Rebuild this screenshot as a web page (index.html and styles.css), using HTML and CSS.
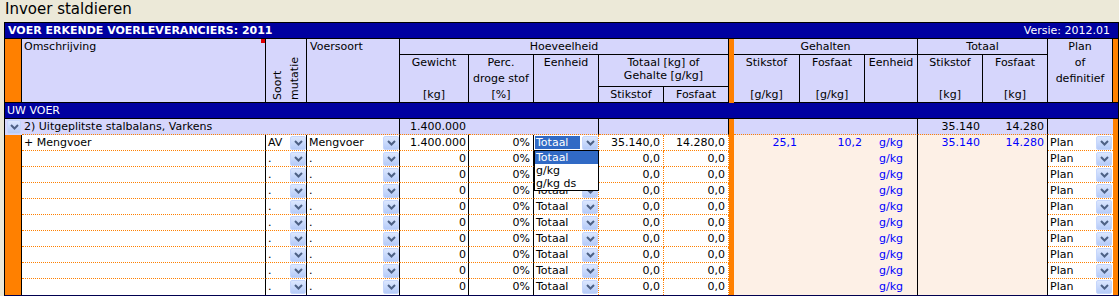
FILE: index.html
```html
<!DOCTYPE html>
<html>
<head>
<meta charset="utf-8">
<link rel="stylesheet" href="styles.css">
</head>
<body>
<div class="title">Invoer staldieren</div>
<div class="sheet">
  <div class="bar"><span class="bar-title">VOER ERKENDE VOERLEVERANCIERS: 2011</span><span>Versie: 2012.01</span></div>

  <div class="h orange bl rs3"></div>
  <div class="h left rs3 mark">Omschrijving<span class="red"></span></div>
  <div class="h rs3 vert-cell"><span class="vert">Soort<br>mutatie</span></div>
  <div class="h left rs3 pl3">Voersoort</div>
  <div class="h cs5">Hoeveelheid</div>
  <div class="sep rs3"></div>
  <div class="h cs3">Gehalten</div>
  <div class="h cs2">Totaal</div>
  <div class="h rs3">Plan<br>of<br>definitief</div>
  <div class="orange rs3 hb"></div>

  <div class="h rs2">Gewicht<br><br>[kg]</div>
  <div class="h rs2">Perc.<br>droge stof<br>[%]</div>
  <div class="h rs2">Eenheid</div>
  <div class="h cs2 tight">Totaal [kg] of<br>Gehalte [g/kg]</div>
  <div class="h rs2">Stikstof<br><br>[g/kg]</div>
  <div class="h rs2">Fosfaat<br><br>[g/kg]</div>
  <div class="h rs2">Eenheid</div>
  <div class="h rs2">Stikstof<br><br>[kg]</div>
  <div class="h rs2">Fosfaat<br><br>[kg]</div>

  <div class="h">Stikstof</div>
  <div class="h">Fosfaat</div>

  <div class="uw">UW VOER</div>

  <div class="g gbtn"><span class="dd sm"><svg width="9" height="6" viewBox="0 0 9 6"><path d="M1 1L4.5 4.5L8 1" fill="none" stroke="#4d6185" stroke-width="2"/></svg></span></div>
  <div class="g cs3 bk left">2) Uitgeplitste stalbalans, Varkens</div>
  <div class="g num">1.400.000</div>
  <div class="g cs2 bk"></div>
  <div class="g cs2 bk"></div>
  <div class="sep"></div>
  <div class="g cs3 bk"></div>
  <div class="g num">35.140</div>
  <div class="g num bk">14.280</div>
  <div class="g"></div>
  <div class="orange"></div>

  <!-- row 1 -->
  <div class="orange bl"></div>
  <div class="d bk">+ Mengvoer</div>
  <div class="d bk combo">AV<span class="dd"><svg width="9" height="6" viewBox="0 0 9 6"><path d="M1 1L4.5 4.5L8 1" fill="none" stroke="#4d6185" stroke-width="2"/></svg></span></div>
  <div class="d bk combo">Mengvoer<span class="dd"><svg width="9" height="6" viewBox="0 0 9 6"><path d="M1 1L4.5 4.5L8 1" fill="none" stroke="#4d6185" stroke-width="2"/></svg></span></div>
  <div class="d bk num n2">1.400.000</div>
  <div class="d bk num">0%</div>
  <div class="d dt combo open"><span class="sel">Totaal</span><span class="dd"><svg width="9" height="6" viewBox="0 0 9 6"><path d="M1 1L4.5 4.5L8 1" fill="none" stroke="#4d6185" stroke-width="2"/></svg></span>
    <div class="popup"><div class="opt on">Totaal</div><div class="opt">g/kg</div><div class="opt">g/kg ds</div></div>
  </div>
  <div class="d dt num">35.140,0</div>
  <div class="d dt num">14.280,0</div>
  <div class="sep"></div>
  <div class="p num">25,1</div>
  <div class="p num">10,2</div>
  <div class="p bk mid">g/kg</div>
  <div class="p num">35.140</div>
  <div class="p num bk">14.280</div>
  <div class="d combo plan">Plan<span class="dd"><svg width="9" height="6" viewBox="0 0 9 6"><path d="M1 1L4.5 4.5L8 1" fill="none" stroke="#4d6185" stroke-width="2"/></svg></span></div>
  <div class="orange"></div>

  <!-- row 2 -->
  <div class="orange bl"></div>
  <div class="d bk"></div>
  <div class="d bk combo">.<span class="dd"><svg width="9" height="6" viewBox="0 0 9 6"><path d="M1 1L4.5 4.5L8 1" fill="none" stroke="#4d6185" stroke-width="2"/></svg></span></div>
  <div class="d bk combo">.<span class="dd"><svg width="9" height="6" viewBox="0 0 9 6"><path d="M1 1L4.5 4.5L8 1" fill="none" stroke="#4d6185" stroke-width="2"/></svg></span></div>
  <div class="d bk num n2">0</div>
  <div class="d bk num">0%</div>
  <div class="d dt combo"><span class="covered">Totaal</span></div>
  <div class="d dt num">0,0</div>
  <div class="d dt num">0,0</div>
  <div class="sep"></div>
  <div class="p"></div>
  <div class="p"></div>
  <div class="p bk mid">g/kg</div>
  <div class="p"></div>
  <div class="p bk"></div>
  <div class="d combo plan">Plan<span class="dd"><svg width="9" height="6" viewBox="0 0 9 6"><path d="M1 1L4.5 4.5L8 1" fill="none" stroke="#4d6185" stroke-width="2"/></svg></span></div>
  <div class="orange"></div>

  <!-- row 3 -->
  <div class="orange bl"></div>
  <div class="d bk"></div>
  <div class="d bk combo">.<span class="dd"><svg width="9" height="6" viewBox="0 0 9 6"><path d="M1 1L4.5 4.5L8 1" fill="none" stroke="#4d6185" stroke-width="2"/></svg></span></div>
  <div class="d bk combo">.<span class="dd"><svg width="9" height="6" viewBox="0 0 9 6"><path d="M1 1L4.5 4.5L8 1" fill="none" stroke="#4d6185" stroke-width="2"/></svg></span></div>
  <div class="d bk num n2">0</div>
  <div class="d bk num">0%</div>
  <div class="d dt combo"><span class="covered">Totaal</span></div>
  <div class="d dt num">0,0</div>
  <div class="d dt num">0,0</div>
  <div class="sep"></div>
  <div class="p"></div>
  <div class="p"></div>
  <div class="p bk mid">g/kg</div>
  <div class="p"></div>
  <div class="p bk"></div>
  <div class="d combo plan">Plan<span class="dd"><svg width="9" height="6" viewBox="0 0 9 6"><path d="M1 1L4.5 4.5L8 1" fill="none" stroke="#4d6185" stroke-width="2"/></svg></span></div>
  <div class="orange"></div>

  <!-- row 4 -->
  <div class="orange bl"></div>
  <div class="d bk"></div>
  <div class="d bk combo">.<span class="dd"><svg width="9" height="6" viewBox="0 0 9 6"><path d="M1 1L4.5 4.5L8 1" fill="none" stroke="#4d6185" stroke-width="2"/></svg></span></div>
  <div class="d bk combo">.<span class="dd"><svg width="9" height="6" viewBox="0 0 9 6"><path d="M1 1L4.5 4.5L8 1" fill="none" stroke="#4d6185" stroke-width="2"/></svg></span></div>
  <div class="d bk num n2">0</div>
  <div class="d bk num">0%</div>
  <div class="d dt combo">Totaal<span class="dd"><svg width="9" height="6" viewBox="0 0 9 6"><path d="M1 1L4.5 4.5L8 1" fill="none" stroke="#4d6185" stroke-width="2"/></svg></span></div>
  <div class="d dt num">0,0</div>
  <div class="d dt num">0,0</div>
  <div class="sep"></div>
  <div class="p"></div>
  <div class="p"></div>
  <div class="p bk mid">g/kg</div>
  <div class="p"></div>
  <div class="p bk"></div>
  <div class="d combo plan">Plan<span class="dd"><svg width="9" height="6" viewBox="0 0 9 6"><path d="M1 1L4.5 4.5L8 1" fill="none" stroke="#4d6185" stroke-width="2"/></svg></span></div>
  <div class="orange"></div>

  <!-- row 5 -->
  <div class="orange bl"></div>
  <div class="d bk"></div>
  <div class="d bk combo">.<span class="dd"><svg width="9" height="6" viewBox="0 0 9 6"><path d="M1 1L4.5 4.5L8 1" fill="none" stroke="#4d6185" stroke-width="2"/></svg></span></div>
  <div class="d bk combo">.<span class="dd"><svg width="9" height="6" viewBox="0 0 9 6"><path d="M1 1L4.5 4.5L8 1" fill="none" stroke="#4d6185" stroke-width="2"/></svg></span></div>
  <div class="d bk num n2">0</div>
  <div class="d bk num">0%</div>
  <div class="d dt combo">Totaal<span class="dd"><svg width="9" height="6" viewBox="0 0 9 6"><path d="M1 1L4.5 4.5L8 1" fill="none" stroke="#4d6185" stroke-width="2"/></svg></span></div>
  <div class="d dt num">0,0</div>
  <div class="d dt num">0,0</div>
  <div class="sep"></div>
  <div class="p"></div>
  <div class="p"></div>
  <div class="p bk mid">g/kg</div>
  <div class="p"></div>
  <div class="p bk"></div>
  <div class="d combo plan">Plan<span class="dd"><svg width="9" height="6" viewBox="0 0 9 6"><path d="M1 1L4.5 4.5L8 1" fill="none" stroke="#4d6185" stroke-width="2"/></svg></span></div>
  <div class="orange"></div>

  <!-- row 6 -->
  <div class="orange bl"></div>
  <div class="d bk"></div>
  <div class="d bk combo">.<span class="dd"><svg width="9" height="6" viewBox="0 0 9 6"><path d="M1 1L4.5 4.5L8 1" fill="none" stroke="#4d6185" stroke-width="2"/></svg></span></div>
  <div class="d bk combo">.<span class="dd"><svg width="9" height="6" viewBox="0 0 9 6"><path d="M1 1L4.5 4.5L8 1" fill="none" stroke="#4d6185" stroke-width="2"/></svg></span></div>
  <div class="d bk num n2">0</div>
  <div class="d bk num">0%</div>
  <div class="d dt combo">Totaal<span class="dd"><svg width="9" height="6" viewBox="0 0 9 6"><path d="M1 1L4.5 4.5L8 1" fill="none" stroke="#4d6185" stroke-width="2"/></svg></span></div>
  <div class="d dt num">0,0</div>
  <div class="d dt num">0,0</div>
  <div class="sep"></div>
  <div class="p"></div>
  <div class="p"></div>
  <div class="p bk mid">g/kg</div>
  <div class="p"></div>
  <div class="p bk"></div>
  <div class="d combo plan">Plan<span class="dd"><svg width="9" height="6" viewBox="0 0 9 6"><path d="M1 1L4.5 4.5L8 1" fill="none" stroke="#4d6185" stroke-width="2"/></svg></span></div>
  <div class="orange"></div>

  <!-- row 7 -->
  <div class="orange bl"></div>
  <div class="d bk"></div>
  <div class="d bk combo">.<span class="dd"><svg width="9" height="6" viewBox="0 0 9 6"><path d="M1 1L4.5 4.5L8 1" fill="none" stroke="#4d6185" stroke-width="2"/></svg></span></div>
  <div class="d bk combo">.<span class="dd"><svg width="9" height="6" viewBox="0 0 9 6"><path d="M1 1L4.5 4.5L8 1" fill="none" stroke="#4d6185" stroke-width="2"/></svg></span></div>
  <div class="d bk num n2">0</div>
  <div class="d bk num">0%</div>
  <div class="d dt combo">Totaal<span class="dd"><svg width="9" height="6" viewBox="0 0 9 6"><path d="M1 1L4.5 4.5L8 1" fill="none" stroke="#4d6185" stroke-width="2"/></svg></span></div>
  <div class="d dt num">0,0</div>
  <div class="d dt num">0,0</div>
  <div class="sep"></div>
  <div class="p"></div>
  <div class="p"></div>
  <div class="p bk mid">g/kg</div>
  <div class="p"></div>
  <div class="p bk"></div>
  <div class="d combo plan">Plan<span class="dd"><svg width="9" height="6" viewBox="0 0 9 6"><path d="M1 1L4.5 4.5L8 1" fill="none" stroke="#4d6185" stroke-width="2"/></svg></span></div>
  <div class="orange"></div>

  <!-- row 8 -->
  <div class="orange bl"></div>
  <div class="d bk"></div>
  <div class="d bk combo">.<span class="dd"><svg width="9" height="6" viewBox="0 0 9 6"><path d="M1 1L4.5 4.5L8 1" fill="none" stroke="#4d6185" stroke-width="2"/></svg></span></div>
  <div class="d bk combo">.<span class="dd"><svg width="9" height="6" viewBox="0 0 9 6"><path d="M1 1L4.5 4.5L8 1" fill="none" stroke="#4d6185" stroke-width="2"/></svg></span></div>
  <div class="d bk num n2">0</div>
  <div class="d bk num">0%</div>
  <div class="d dt combo">Totaal<span class="dd"><svg width="9" height="6" viewBox="0 0 9 6"><path d="M1 1L4.5 4.5L8 1" fill="none" stroke="#4d6185" stroke-width="2"/></svg></span></div>
  <div class="d dt num">0,0</div>
  <div class="d dt num">0,0</div>
  <div class="sep"></div>
  <div class="p"></div>
  <div class="p"></div>
  <div class="p bk mid">g/kg</div>
  <div class="p"></div>
  <div class="p bk"></div>
  <div class="d combo plan">Plan<span class="dd"><svg width="9" height="6" viewBox="0 0 9 6"><path d="M1 1L4.5 4.5L8 1" fill="none" stroke="#4d6185" stroke-width="2"/></svg></span></div>
  <div class="orange"></div>

  <!-- row 9 -->
  <div class="orange bl"></div>
  <div class="d bk"></div>
  <div class="d bk combo">.<span class="dd"><svg width="9" height="6" viewBox="0 0 9 6"><path d="M1 1L4.5 4.5L8 1" fill="none" stroke="#4d6185" stroke-width="2"/></svg></span></div>
  <div class="d bk combo">.<span class="dd"><svg width="9" height="6" viewBox="0 0 9 6"><path d="M1 1L4.5 4.5L8 1" fill="none" stroke="#4d6185" stroke-width="2"/></svg></span></div>
  <div class="d bk num n2">0</div>
  <div class="d bk num">0%</div>
  <div class="d dt combo">Totaal<span class="dd"><svg width="9" height="6" viewBox="0 0 9 6"><path d="M1 1L4.5 4.5L8 1" fill="none" stroke="#4d6185" stroke-width="2"/></svg></span></div>
  <div class="d dt num">0,0</div>
  <div class="d dt num">0,0</div>
  <div class="sep"></div>
  <div class="p"></div>
  <div class="p"></div>
  <div class="p bk mid">g/kg</div>
  <div class="p"></div>
  <div class="p bk"></div>
  <div class="d combo plan">Plan<span class="dd"><svg width="9" height="6" viewBox="0 0 9 6"><path d="M1 1L4.5 4.5L8 1" fill="none" stroke="#4d6185" stroke-width="2"/></svg></span></div>
  <div class="orange"></div>

  <!-- row 10 -->
  <div class="orange bl"></div>
  <div class="d bk last"></div>
  <div class="d bk combo last">.<span class="dd"><svg width="9" height="6" viewBox="0 0 9 6"><path d="M1 1L4.5 4.5L8 1" fill="none" stroke="#4d6185" stroke-width="2"/></svg></span></div>
  <div class="d bk combo last">.<span class="dd"><svg width="9" height="6" viewBox="0 0 9 6"><path d="M1 1L4.5 4.5L8 1" fill="none" stroke="#4d6185" stroke-width="2"/></svg></span></div>
  <div class="d bk num n2 last">0</div>
  <div class="d bk num last">0%</div>
  <div class="d dt combo last">Totaal<span class="dd"><svg width="9" height="6" viewBox="0 0 9 6"><path d="M1 1L4.5 4.5L8 1" fill="none" stroke="#4d6185" stroke-width="2"/></svg></span></div>
  <div class="d dt num last">0,0</div>
  <div class="d dt num last">0,0</div>
  <div class="sep"></div>
  <div class="p"></div>
  <div class="p"></div>
  <div class="p bk mid">g/kg</div>
  <div class="p"></div>
  <div class="p bk"></div>
  <div class="d combo plan last">Plan<span class="dd"><svg width="9" height="6" viewBox="0 0 9 6"><path d="M1 1L4.5 4.5L8 1" fill="none" stroke="#4d6185" stroke-width="2"/></svg></span></div>
  <div class="orange"></div>
</div>
</body>
</html>
```

FILE: styles.css
```css
body {
  margin: 0;
  background: #ece9d8;
  font-family: "DejaVu Sans", Verdana, sans-serif;
  font-size: 11px;
  color: #000;
}

.title {
  height: 22px;
  line-height: 18px;
  font-size: 15px;
  padding-left: 5px;
  box-sizing: border-box;
}

.sheet {
  margin-left: 4px;
  width: 1113px;
  border: 1px solid #000;
  border-bottom: 1px solid #000050;
  display: grid;
  grid-template-columns: 17px 244px 41px 93px 69px 65px 65px 65px 65px 5px 66px 65px 53px 65px 65px 65px 5px;
  grid-template-rows: 16px 16px 32px 16px 16px 16px repeat(10, 16px);
  background: #fff;
}

.sheet > div {
  box-sizing: border-box;
  line-height: 16px;
  white-space: nowrap;
  min-width: 0;
}

.bar {
  grid-column: 1 / -1;
  background: #0000a0;
  color: #fff;
  display: flex;
  justify-content: space-between;
  padding: 0 8px 0 3px;
  border-bottom: 1px solid #000;
}

.bar-title {
  font-weight: bold;
}

.h {
  background: #d6d6fc;
  border-right: 1px solid #000;
  border-bottom: 1px solid #000;
  text-align: center;
}

.h.left {
  text-align: left;
  padding-left: 2px;
}

.h.pl3 {
  padding-left: 3px;
}

.h.tight {
  line-height: 13px !important;
  padding-top: 1px;
}

.mark {
  position: relative;
}

.red {
  position: absolute;
  top: 0;
  right: 0;
  width: 4px;
  height: 4px;
  background: #e00000;
}

.vert-cell {
  display: flex;
  justify-content: center;
  align-items: flex-end;
  padding-bottom: 2px;
}

.vert {
  writing-mode: vertical-rl;
  transform: rotate(180deg);
  line-height: 17px;
  text-align: left;
}

.rs3 { grid-row: span 3; }
.rs2 { grid-row: span 2; }
.cs5 { grid-column: span 5; }
.cs3 { grid-column: span 3; }
.cs2 { grid-column: span 2; }

.orange {
  background: #ff8000;
}

.orange.bl {
  border-right: 1px solid #000;
}

.orange.hb {
  border-bottom: 1px solid #000;
}

.h.orange {
  background: #ff8000;
}

.sep {
  background: #ff8000;
}

.uw {
  grid-column: 1 / -1;
  background: #0000a0;
  color: #fff;
  padding-left: 2px;
  border-bottom: 1px solid #000;
}

.g {
  background: #d6d6fc;
  border-bottom: 1px dotted #ff8000;
}

.g.left {
  padding-left: 2px;
}

.gbtn {
  display: flex;
  align-items: center;
  padding-left: 2px;
  border-bottom: none !important;
}

.bk {
  border-right: 1px solid #000;
}

.dt {
  border-right: 1px dotted #ff8000;
}

.num {
  text-align: right;
  padding-right: 3px;
}

.n2 {
  padding-right: 2px;
}

.d {
  background: #fff;
  border-bottom: 1px dotted #ff8000;
  line-height: 15px !important;
  padding-left: 2px;
}

.d.last {
  border-bottom: none;
}

.d.num {
  padding-left: 0;
}

.combo {
  display: flex;
  justify-content: space-between;
  align-items: flex-start;
}

.combo .dd {
  margin-top: 1px;
}

.plan .dd {
  margin-right: 1px;
}

.covered {
  visibility: hidden;
}

.open {
  position: relative;
  padding-left: 0;
}

.sel {
  background: #316ac5;
  color: #fff;
  margin: 1px 0 0 1px;
  padding-left: 1px;
  width: 45px;
  box-sizing: border-box;
  height: 13px;
  line-height: 13px;
}

.popup {
  position: absolute;
  left: 0;
  top: 15px;
  width: 65px;
  height: 41px;
  box-sizing: border-box;
  border: 1px solid #000;
  background: #fff;
  z-index: 2;
}

.opt {
  height: 13px;
  line-height: 13px;
  padding-left: 1px;
  color: #000;
}

.opt.on {
  background: #316ac5;
  color: #fff;
}

.p {
  background: #fdf0e6;
  color: #0000ff;
}

.p.mid {
  text-align: center;
}

.dd {
  width: 16px;
  height: 14px;
  box-sizing: border-box;
  border: 1px solid #c6d6fc;
  border-radius: 2px;
  background: linear-gradient(#dce7fe, #b5cbf8);
  display: flex;
  align-items: center;
  justify-content: center;
  flex: none;
}

.dd.sm {
  width: 14px;
}
```
